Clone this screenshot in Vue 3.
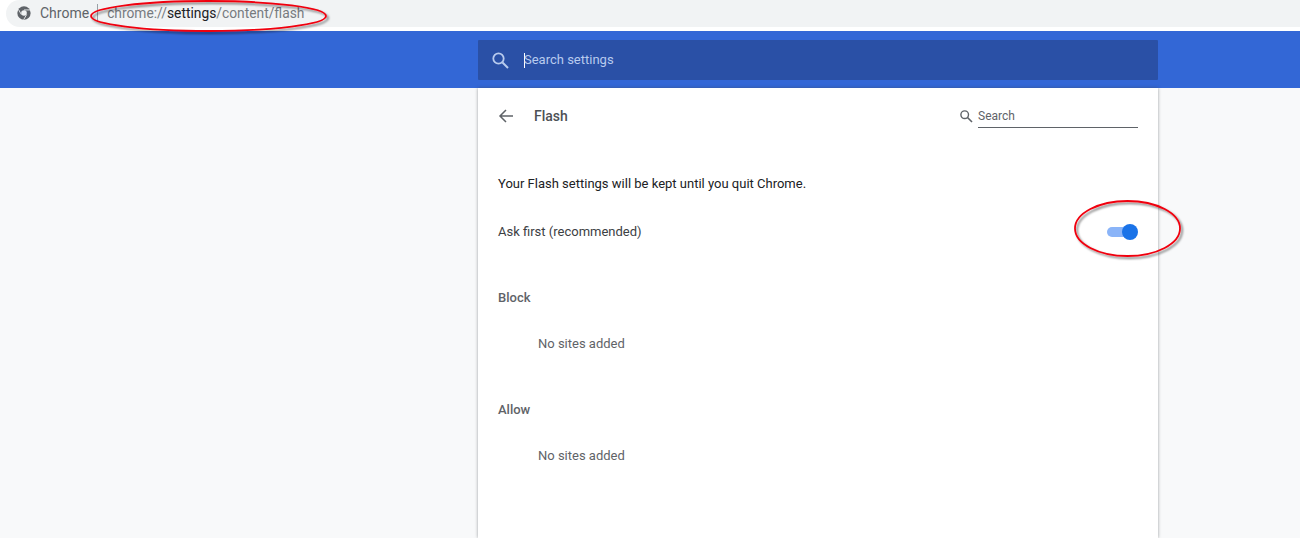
<script setup>
const sections = ['Block', 'Allow']
</script>

<template>
  <div class="page">
    <div class="chrome-bar">
      <div class="omnibox">
        <svg class="chrome-icon" width="16" height="16" viewBox="0 0 24 24">
          <circle cx="12" cy="12" r="10" fill="#5f6368" />
          <circle cx="12" cy="12" r="4.2" fill="#f1f3f4" />
          <path d="M12 7.4h9M8 14.3 3.6 6.5M16 14.3l-4.5 7.7" stroke="#f1f3f4" stroke-width="1.3" fill="none" />
        </svg>
        <span class="origin">Chrome</span>
        <span class="divider"></span>
        <span class="url">chrome://<b>settings</b>/content/flash</span>
      </div>
    </div>

    <header class="blue-header">
      <div class="search-box">
        <svg class="search-icon" width="24" height="24" viewBox="0 0 24 24">
          <circle cx="10.5" cy="10.5" r="5.2" fill="none" stroke="#b8cbee" stroke-width="1.8" />
          <path d="M14.5 14.5 20 20" stroke="#b8cbee" stroke-width="1.9" />
        </svg>
        <span class="caret"></span>
        <span class="search-text">Search settings</span>
      </div>
    </header>

    <main class="card">
      <div class="card-head">
        <svg class="back" width="16" height="16" viewBox="0 0 16 16">
          <path d="M15 8H2M8 2 2 8l6 6" fill="none" stroke="#5f6368" stroke-width="1.5" />
        </svg>
        <span class="title">Flash</span>
        <div class="mini-search">
          <svg width="14" height="14" viewBox="0 0 14 14">
            <circle cx="5.7" cy="5.7" r="3.8" fill="none" stroke="#5f6368" stroke-width="1.4" />
            <path d="M8.5 8.5 13 13" stroke="#5f6368" stroke-width="1.6" />
          </svg>
          <span class="mini-field">Search</span>
        </div>
      </div>

      <p class="note">Your Flash settings will be kept until you quit Chrome.</p>

      <div class="ask-row">
        <span>Ask first (recommended)</span>
        <span class="toggle"><span class="knob"></span></span>
      </div>

      <section v-for="name in sections" :key="name" class="site-section">
        <h2>{{ name }}</h2>
        <p>No sites added</p>
      </section>
    </main>

    <svg class="annotation" width="1300" height="538" viewBox="0 0 1300 538">
      <defs>
        <filter id="ring-shadow" x="-10%" y="-30%" width="120%" height="170%">
          <feDropShadow dx="2" dy="2" stdDeviation="1.2" flood-color="#000" flood-opacity=".5" />
        </filter>
      </defs>
      <g fill="none" stroke="#f00010" stroke-width="1.8" filter="url(#ring-shadow)">
        <ellipse cx="208.5" cy="16" rx="117.5" ry="15" />
        <ellipse cx="1127.5" cy="228.5" rx="52.5" ry="27.5" />
      </g>
    </svg>
  </div>
</template>

<style scoped>
.page {
  position: relative;
  width: 1300px;
  height: 538px;
  overflow: hidden;
  background: #f8f9fa;
  font-family: Roboto, "Liberation Sans", sans-serif;
  font-size: 13px;
  color: #202124;
}
.chrome-bar {
  height: 31px;
  padding-left: 6px;
  background: #fff;
  box-sizing: border-box;
}
.omnibox {
  display: flex;
  align-items: center;
  height: 27px;
  padding: 0 0 1px 10px;
  box-sizing: border-box;
  background: #f1f3f4;
  border-radius: 14px 0 0 14px;
}
.chrome-icon { flex: none; }
.origin {
  margin-left: 8px;
  font-size: 14px;
  color: #5f6368;
}
.divider {
  width: 1px;
  height: 18px;
  margin: 0 9px 0 8px;
  background: #9aa0a6;
}
.url {
  font-size: 13.8px;
  color: #777b80;
}
.url b {
  font-weight: 400;
  color: #202124;
}
.blue-header {
  height: 57px;
  padding: 9px 0 0 478px;
  box-sizing: border-box;
  background: #3367d6;
}
.search-box {
  display: flex;
  align-items: center;
  width: 680px;
  height: 40px;
  padding-left: 10px;
  box-sizing: border-box;
  background: #2a50a6;
  border-radius: 1px;
}
.search-icon { flex: none; }
.caret {
  width: 1px;
  height: 15px;
  margin: 0 -1px 0 12px;
  background: #fff;
}
.search-text {
  padding-bottom: 2px;
  font-size: 13px;
  color: #b8cbee;
}
.card {
  width: 680px;
  height: 450px;
  margin-left: 478px;
  padding: 0 20px;
  box-sizing: border-box;
  background: #fff;
  box-shadow: 0 0 3px rgba(60, 64, 67, .5);
}
.card-head {
  display: flex;
  align-items: center;
  height: 56px;
}
.title {
  margin-left: 20px;
  font-size: 14px;
  font-weight: 500;
  color: #4d5156;
}
.mini-search {
  display: flex;
  align-items: center;
  margin-left: auto;
  gap: 5px;
}
.mini-field {
  width: 160px;
  height: 24px;
  line-height: 24px;
  box-sizing: border-box;
  border-bottom: 1px solid #5f6368;
  font-size: 12px;
  color: #5f6368;
}
.note {
  margin: 0;
  padding-top: 31px;
  line-height: 18px;
}
.ask-row {
  display: flex;
  align-items: center;
  justify-content: space-between;
  height: 20px;
  margin-top: 28px;
  color: #3c4043;
}
.toggle {
  position: relative;
  width: 29px;
  height: 10px;
  margin: 2px 2px 0 0;
  background: #8ab4f8;
  border-radius: 5px;
}
.knob {
  position: absolute;
  top: -3px;
  right: -2px;
  width: 16px;
  height: 16px;
  background: #1a73e8;
  border-radius: 50%;
}
.site-section h2 {
  margin: 0;
  padding-top: 46px;
  font-size: 13px;
  line-height: 20px;
  font-weight: 500;
  color: #5f6368;
}
.site-section:first-of-type h2 {
  padding-top: 47px;
}
.site-section p {
  margin: 0;
  padding: 26px 0 0 40px;
  line-height: 20px;
  color: #5f6368;
}
.annotation {
  position: absolute;
  top: 0;
  left: 0;
  pointer-events: none;
}
</style>
